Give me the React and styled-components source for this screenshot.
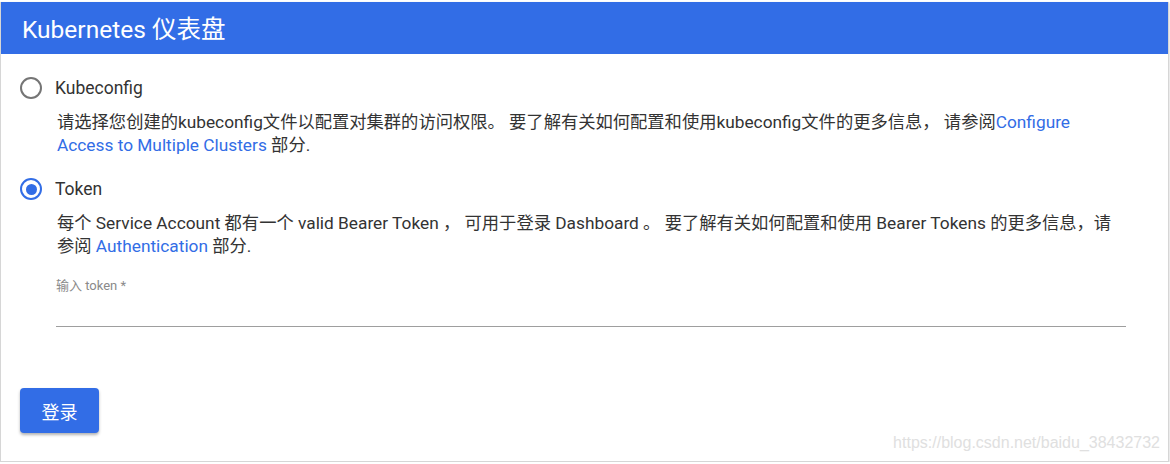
import React from 'react';
import styled, { createGlobalStyle } from 'styled-components';

const GlobalStyle = createGlobalStyle`
  html, body {
    margin: 0;
    padding: 0;
    background: #fff;
  }
  body {
    font-family: Roboto, "Noto Sans CJK SC", sans-serif;
    color: rgba(0, 0, 0, 0.87);
  }
`;

const Card = styled.div`
  position: relative;
  margin: 2px 1px 0 0;
  height: 460px;
  box-sizing: border-box;
  background: #fff;
  border: 1px solid #d6d6d6;
  border-top: none;
  box-shadow: 0 1px 2px rgba(0, 0, 0, 0.25);
  overflow: hidden;
`;

const Header = styled.div`
  height: 52px;
  background: #326de6;
  color: #fff;
  font-size: 24.5px;
  display: flex;
  align-items: center;
  padding-left: 21px;
  padding-bottom: 2px;
  box-sizing: border-box;
`;

const Body = styled.div`
  padding: 20px 42px 0 19px;
  display: flex;
  flex-direction: column;
`;

const Option = styled.div`
  display: flex;
  flex-direction: column;
  margin-bottom: ${(p) => p.gap || 0}px;
`;

const RadioRow = styled.label`
  display: flex;
  align-items: center;
  gap: 13px;
  height: 28px;
  font-size: 17.5px;
  color: #333;
`;

const Radio = styled.span`
  width: 22px;
  height: 22px;
  box-sizing: border-box;
  border-radius: 50%;
  border: 2px solid ${(p) => (p.checked ? '#326de6' : '#757575')};
  display: flex;
  align-items: center;
  justify-content: center;
  &::after {
    content: '';
    width: 11px;
    height: 11px;
    border-radius: 50%;
    background: #326de6;
    display: ${(p) => (p.checked ? 'block' : 'none')};
  }
`;

const Desc = styled.p`
  margin: 9px 0 0 37px;
  font-size: 17.3px;
  line-height: 23px;
  color: #333;
`;

const Link = styled.a`
  color: #326de6;
  text-decoration: none;
`;

const Field = styled.div`
  margin: 20px 0 0 36px;
  display: flex;
  flex-direction: column;
`;

const FieldLabel = styled.span`
  font-size: 13px;
  color: #8a8a8a;
  line-height: 16px;
`;

const Input = styled.input`
  border: none;
  border-bottom: 1px solid #9e9e9e;
  outline: none;
  height: 32px;
  padding: 0;
  font-size: 16px;
  background: transparent;
`;

const Button = styled.button`
  margin-top: 61px;
  align-self: flex-start;
  width: 79px;
  height: 45px;
  border: none;
  border-radius: 4px;
  background: #326de6;
  color: #fff;
  font-size: 18px;
  font-family: Roboto, "Noto Sans CJK SC", sans-serif;
  box-shadow: 0 2px 3px rgba(0, 0, 0, 0.3);
`;

const Credit = styled.span`
  position: absolute;
  right: 8px;
  bottom: 9px;
  font-family: "Liberation Sans", sans-serif;
  font-size: 16px;
  color: #e0e0e0;
`;

export default function App() {
  return (
    <>
      <GlobalStyle />
      <Card>
        <Header>Kubernetes 仪表盘</Header>
        <Body>
          <Option gap={18}>
            <RadioRow>
              <Radio />
              Kubeconfig
            </RadioRow>
            <Desc>
              请选择您创建的kubeconfig文件以配置对集群的访问权限。 要了解有关如何配置和使用kubeconfig文件的更多信息， 请参阅
              <Link>
                Configure
                <br />
                Access to Multiple Clusters
              </Link>{' '}
              部分.
            </Desc>
          </Option>
          <Option>
            <RadioRow>
              <Radio checked />
              Token
            </RadioRow>
            <Desc>
              每个 Service Account 都有一个 valid Bearer Token ， 可用于登录 Dashboard 。 要了解有关如何配置和使用 Bearer Tokens 的更多信息，请
              <br />
              参阅 <Link>Authentication</Link> 部分.
            </Desc>
          </Option>
          <Field>
            <FieldLabel>输入 token *</FieldLabel>
            <Input />
          </Field>
          <Button>登录</Button>
        </Body>
        <Credit>https://blog.csdn.net/baidu_38432732</Credit>
      </Card>
    </>
  );
}
